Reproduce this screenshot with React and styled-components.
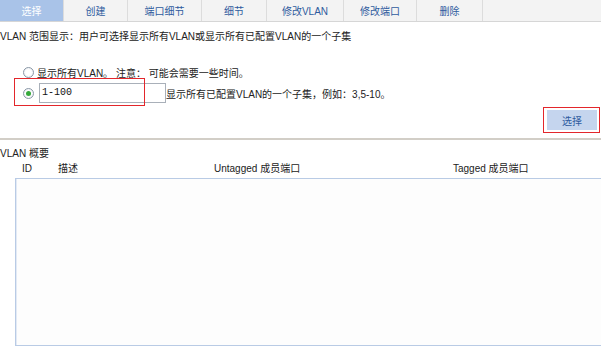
import React from "react";
import styled, { createGlobalStyle } from "styled-components";

const Global = createGlobalStyle`
  html, body { margin: 0; padding: 0; background: #fff; overflow: hidden; }
  body { font-family: "Liberation Sans", "Noto Sans CJK SC", sans-serif; font-size: 10px; color: #222; }
`;

const Page = styled.div`
  width: 601px;
  height: 346px;
  display: flex;
  flex-direction: column;
`;

const TabBar = styled.div`
  display: flex;
  height: 22px;
  box-sizing: border-box;
  background: #f3f3f3;
  border-bottom: 1px solid #d6d6d6;
`;

const Tab = styled.div`
  width: ${(p) => p.$w}px;
  flex: none;
  display: flex;
  align-items: center;
  justify-content: center;
  box-sizing: border-box;
  border-right: 1px solid #dcdcdc;
  background: ${(p) => (p.$active ? "#a9c3e8" : "#f3f3f3")};
  color: ${(p) => (p.$active ? "#ffffff" : "#2f5b9e")};
  font-size: 10px;
`;

const Desc = styled.div`
  margin-top: 8px;
  line-height: 14px;
  height: 14px;
  white-space: nowrap;
`;

const Options = styled.div`
  margin-top: 21px;
  padding-left: 23px;
  display: flex;
  flex-direction: column;
  gap: 4px;
`;

const OptionRow = styled.div`
  position: relative;
  display: flex;
  align-items: center;
  height: ${(p) => p.$h}px;
  white-space: nowrap;
`;

const Radio = styled.span`
  width: 11px;
  height: 11px;
  box-sizing: border-box;
  border-radius: 50%;
  border: 1px solid #8a97a6;
  background: radial-gradient(circle, #ffffff 40%, #e4e8ee 100%);
  display: inline-flex;
  align-items: center;
  justify-content: center;
  flex: none;
  margin-right: ${(p) => p.$gap}px;
  &::after {
    content: "";
    width: 5px;
    height: 5px;
    border-radius: 50%;
    background: ${(p) => (p.$checked ? "#35a83a" : "transparent")};
  }
`;

const RangeInput = styled.div`
  width: 127px;
  height: 20px;
  box-sizing: border-box;
  border: 1px solid #a9b0b9;
  background: #fff;
  font-family: "Liberation Mono", "Noto Sans CJK SC", monospace;
  font-size: 10px;
  line-height: 18px;
  padding-left: 2px;
  color: #111;
  flex: none;
`;

const Highlight = styled.div`
  position: absolute;
  top: ${(p) => p.$top}px;
  left: ${(p) => p.$left}px;
  width: ${(p) => p.$w}px;
  height: ${(p) => p.$h}px;
  box-sizing: border-box;
  border: 1px solid #e3262b;
  pointer-events: none;
`;

const ButtonRow = styled.div`
  margin-top: 7px;
  display: flex;
  justify-content: flex-end;
  padding-right: 4px;
`;

const ButtonWrap = styled.div`
  position: relative;
`;

const SelectButton = styled.div`
  width: 50px;
  height: 20px;
  background: #c5d5ee;
  color: #2f5b9e;
  display: flex;
  align-items: center;
  justify-content: center;
  font-size: 10px;
`;

const Separator = styled.div`
  margin-top: 8px;
  height: 2px;
  background: #d2cec7;
`;

const SectionTitle = styled.div`
  margin-top: 7px;
  line-height: 14px;
  height: 14px;
`;

const HeaderRow = styled.div`
  margin-top: 1px;
  height: 14px;
  line-height: 14px;
  display: grid;
  grid-template-columns: 22px 36px 156px 239px 1fr;
  white-space: nowrap;
`;

const TableBox = styled.div`
  margin-top: 2px;
  margin-left: 15px;
  height: 168px;
  box-sizing: border-box;
  border: 1px solid #b9cbe5;
  border-right: none;
  background: #fdfdfd;
  box-shadow: inset 1px 0 0 #e3eaf5;
`;

const tabs = [
  ["选择", 64],
  ["创建", 64],
  ["端口细节", 74],
  ["细节", 65],
  ["修改VLAN", 77],
  ["修改端口", 73],
  ["删除", 66],
];

export default function App() {
  return (
    <Page>
      <Global />
      <TabBar>
        {tabs.map(([label, w], i) => (
          <Tab key={label} $w={w} $active={i === 0}>
            {label}
          </Tab>
        ))}
      </TabBar>
      <Desc>VLAN 范围显示：用户可选择显示所有VLAN或显示所有已配置VLAN的一个子集</Desc>
      <Options>
        <OptionRow $h={14}>
          <Radio $gap={3} />
          显示所有VLAN。 注意： 可能会需要一些时间。
        </OptionRow>
        <OptionRow $h={20}>
          <Radio $gap={5} $checked />
          <RangeInput>1-100</RangeInput>
          显示所有已配置VLAN的一个子集，例如：3,5-10。
          <Highlight $top={-5} $left={-9} $w={131} $h={28} />
        </OptionRow>
      </Options>
      <ButtonRow>
        <ButtonWrap>
          <SelectButton>选择</SelectButton>
          <Highlight $top={-3} $left={-4} $w={57} $h={26} />
        </ButtonWrap>
      </ButtonRow>
      <Separator />
      <SectionTitle>VLAN 概要</SectionTitle>
      <HeaderRow>
        <span />
        <span>ID</span>
        <span>描述</span>
        <span>Untagged 成员端口</span>
        <span>Tagged 成员端口</span>
      </HeaderRow>
      <TableBox />
    </Page>
  );
}
